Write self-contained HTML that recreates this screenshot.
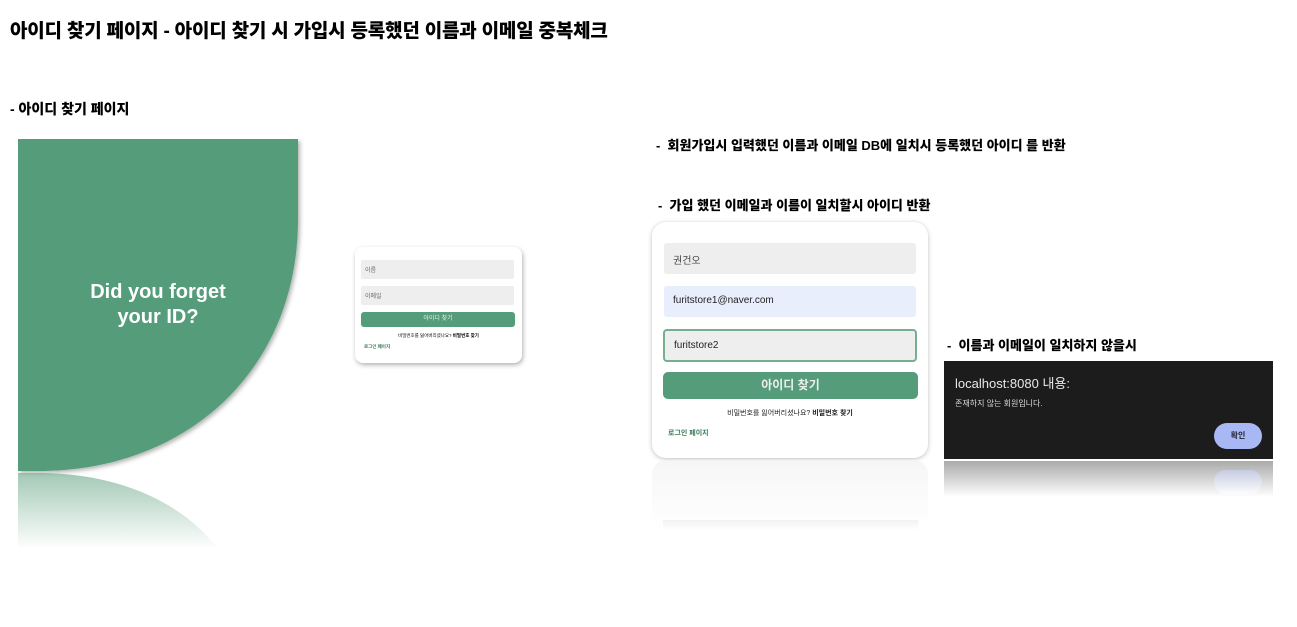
<!DOCTYPE html>
<html><head><meta charset="utf-8"><style>
*{margin:0;padding:0;box-sizing:border-box}
body{width:1297px;height:627px;background:#fff;position:relative;overflow:hidden;font-family:"Liberation Sans","Noto Sans CJK KR",sans-serif}
.a{position:absolute}
.h{font-weight:900;color:#000;white-space:nowrap}
</style></head><body>
<div class="a h" style="left:10px;top:16px;font-size:19px;letter-spacing:-0.2px">아이디 찾기 페이지 - 아이디 찾기 시 가입시 등록했던 이름과 이메일 중복체크</div>
<div class="a h" style="left:10px;top:99px;font-size:14px">- 아이디 찾기 페이지</div>
<div class="a h" style="left:656px;top:135px;font-size:13px">-&nbsp; 회원가입시 입력했던 이름과 이메일 DB에 일치시 등록했던 아이디 를 반환</div>
<div class="a h" style="left:658px;top:195px;font-size:13px">-&nbsp; 가입 했던 이메일과 이름이 일치할시 아이디 반환</div>
<div class="a h" style="left:947px;top:335px;font-size:13px">-&nbsp; 이름과 이메일이 일치하지 않을시</div>

<svg class="a" style="left:18px;top:139px" width="290" height="420">
<defs><linearGradient id="g" x1="0" y1="0" x2="0" y2="1"><stop offset="0" stop-color="#569c7a" stop-opacity=".55"/><stop offset="1" stop-color="#569c7a" stop-opacity="0"/></linearGradient>
<filter id="s"><feDropShadow dx="2" dy="2" stdDeviation="2" flood-opacity=".3"/></filter></defs>
<path d="M0 0H280V80C280 230 170 332 20 332H0Z" fill="#559c7a" filter="url(#s)"/>
<path d="M0 334H20C110 334 170 370 200 410H0Z" fill="url(#g)"/>
<text x="140" y="159" fill="#fff" font-size="20" font-weight="bold" text-anchor="middle" font-family="Liberation Sans">Did you forget</text>
<text x="140" y="184" fill="#fff" font-size="20" font-weight="bold" text-anchor="middle" font-family="Liberation Sans">your ID?</text>
</svg>

<div class="a" style="left:355px;top:247px;width:167px;height:116px;border-radius:8px;background:#fff;box-shadow:1px 2px 5px rgba(0,0,0,.3)">
<div class="a" style="left:6px;top:13px;width:153px;height:19px;background:#eee;border-radius:2px;font-size:6px;color:#666;padding:5px 4px">이름</div>
<div class="a" style="left:6px;top:39px;width:153px;height:19px;background:#eee;border-radius:2px;font-size:6px;color:#666;padding:5px 4px">이메일</div>
<div class="a" style="left:6px;top:65px;width:154px;height:15px;background:#559c7a;border-radius:3px;font-size:6px;color:#eee;text-align:center;line-height:15px">아이디 찾기</div>
<div class="a" style="left:0;top:86px;width:167px;text-align:center;font-size:4.5px;color:#000">비밀번호를 잃어버리셨나요? <b>비밀번호 찾기</b></div>
<div class="a" style="left:9px;top:97px;font-size:4.5px;color:#3a7a5a;font-weight:bold">로그인 페이지</div>
</div>

<div class="a" style="left:652px;top:222px;width:276px;height:236px;border-radius:14px;background:#fff;box-shadow:0 1px 5px rgba(0,0,0,.25)">
<div class="a" style="left:12px;top:21px;width:252px;height:31px;background:#eee;border-radius:3px;font-size:10px;color:#444;padding:9px 9px">권건오</div>
<div class="a" style="left:12px;top:64px;width:252px;height:31px;background:#e8eefc;border-radius:3px;font-size:10px;color:#222;padding:9px 9px">furitstore1@naver.com</div>
<div class="a" style="left:11px;top:107px;width:254px;height:33px;background:#eee;border:2px solid #77ae92;border-radius:4px;font-size:10px;color:#222;padding:9px 9px">furitstore2</div>
<div class="a" style="left:11px;top:150px;width:255px;height:27px;background:#559c7a;border-radius:5px;font-size:12px;color:#eee;font-weight:bold;text-align:center;line-height:27px">아이디 찾기</div>
<div class="a" style="left:0;top:186px;width:276px;text-align:center;font-size:7px;color:#222">비밀번호를 잃어버리셨나요? <b>비밀번호 찾기</b></div>
<div class="a" style="left:16px;top:206px;font-size:7px;color:#3a7a5a;font-weight:bold">로그인 페이지</div>
</div>
<div class="a" style="left:652px;top:460px;width:276px;height:70px;border-radius:14px;background:linear-gradient(#f4f4f4,#fff);opacity:.8"></div>
<div class="a" style="left:663px;top:520px;width:255px;height:10px;background:linear-gradient(#f2f2f2,#fff)"></div>

<div class="a" style="left:944px;top:361px;width:329px;height:98px;background:#1c1c1c">
<div class="a" style="left:11px;top:12px;font-size:13px;color:#e8e8e8">localhost:8080 내용:</div>
<div class="a" style="left:11px;top:37px;font-size:8px;color:#ddd">존재하지 않는 회원입니다.</div>
<div class="a" style="left:270px;top:62px;width:48px;height:26px;border-radius:13px;background:#a8b8f4;font-size:8px;color:#223;font-weight:bold;text-align:center;line-height:26px">확인</div>
</div>
<div class="a" style="left:944px;top:461px;width:329px;height:36px;background:linear-gradient(#aaa,#fff)"></div>
<div class="a" style="left:1214px;top:470px;width:48px;height:24px;border-radius:13px;background:linear-gradient(#c8d0f0,#fff);opacity:.7"></div>
</body></html>
